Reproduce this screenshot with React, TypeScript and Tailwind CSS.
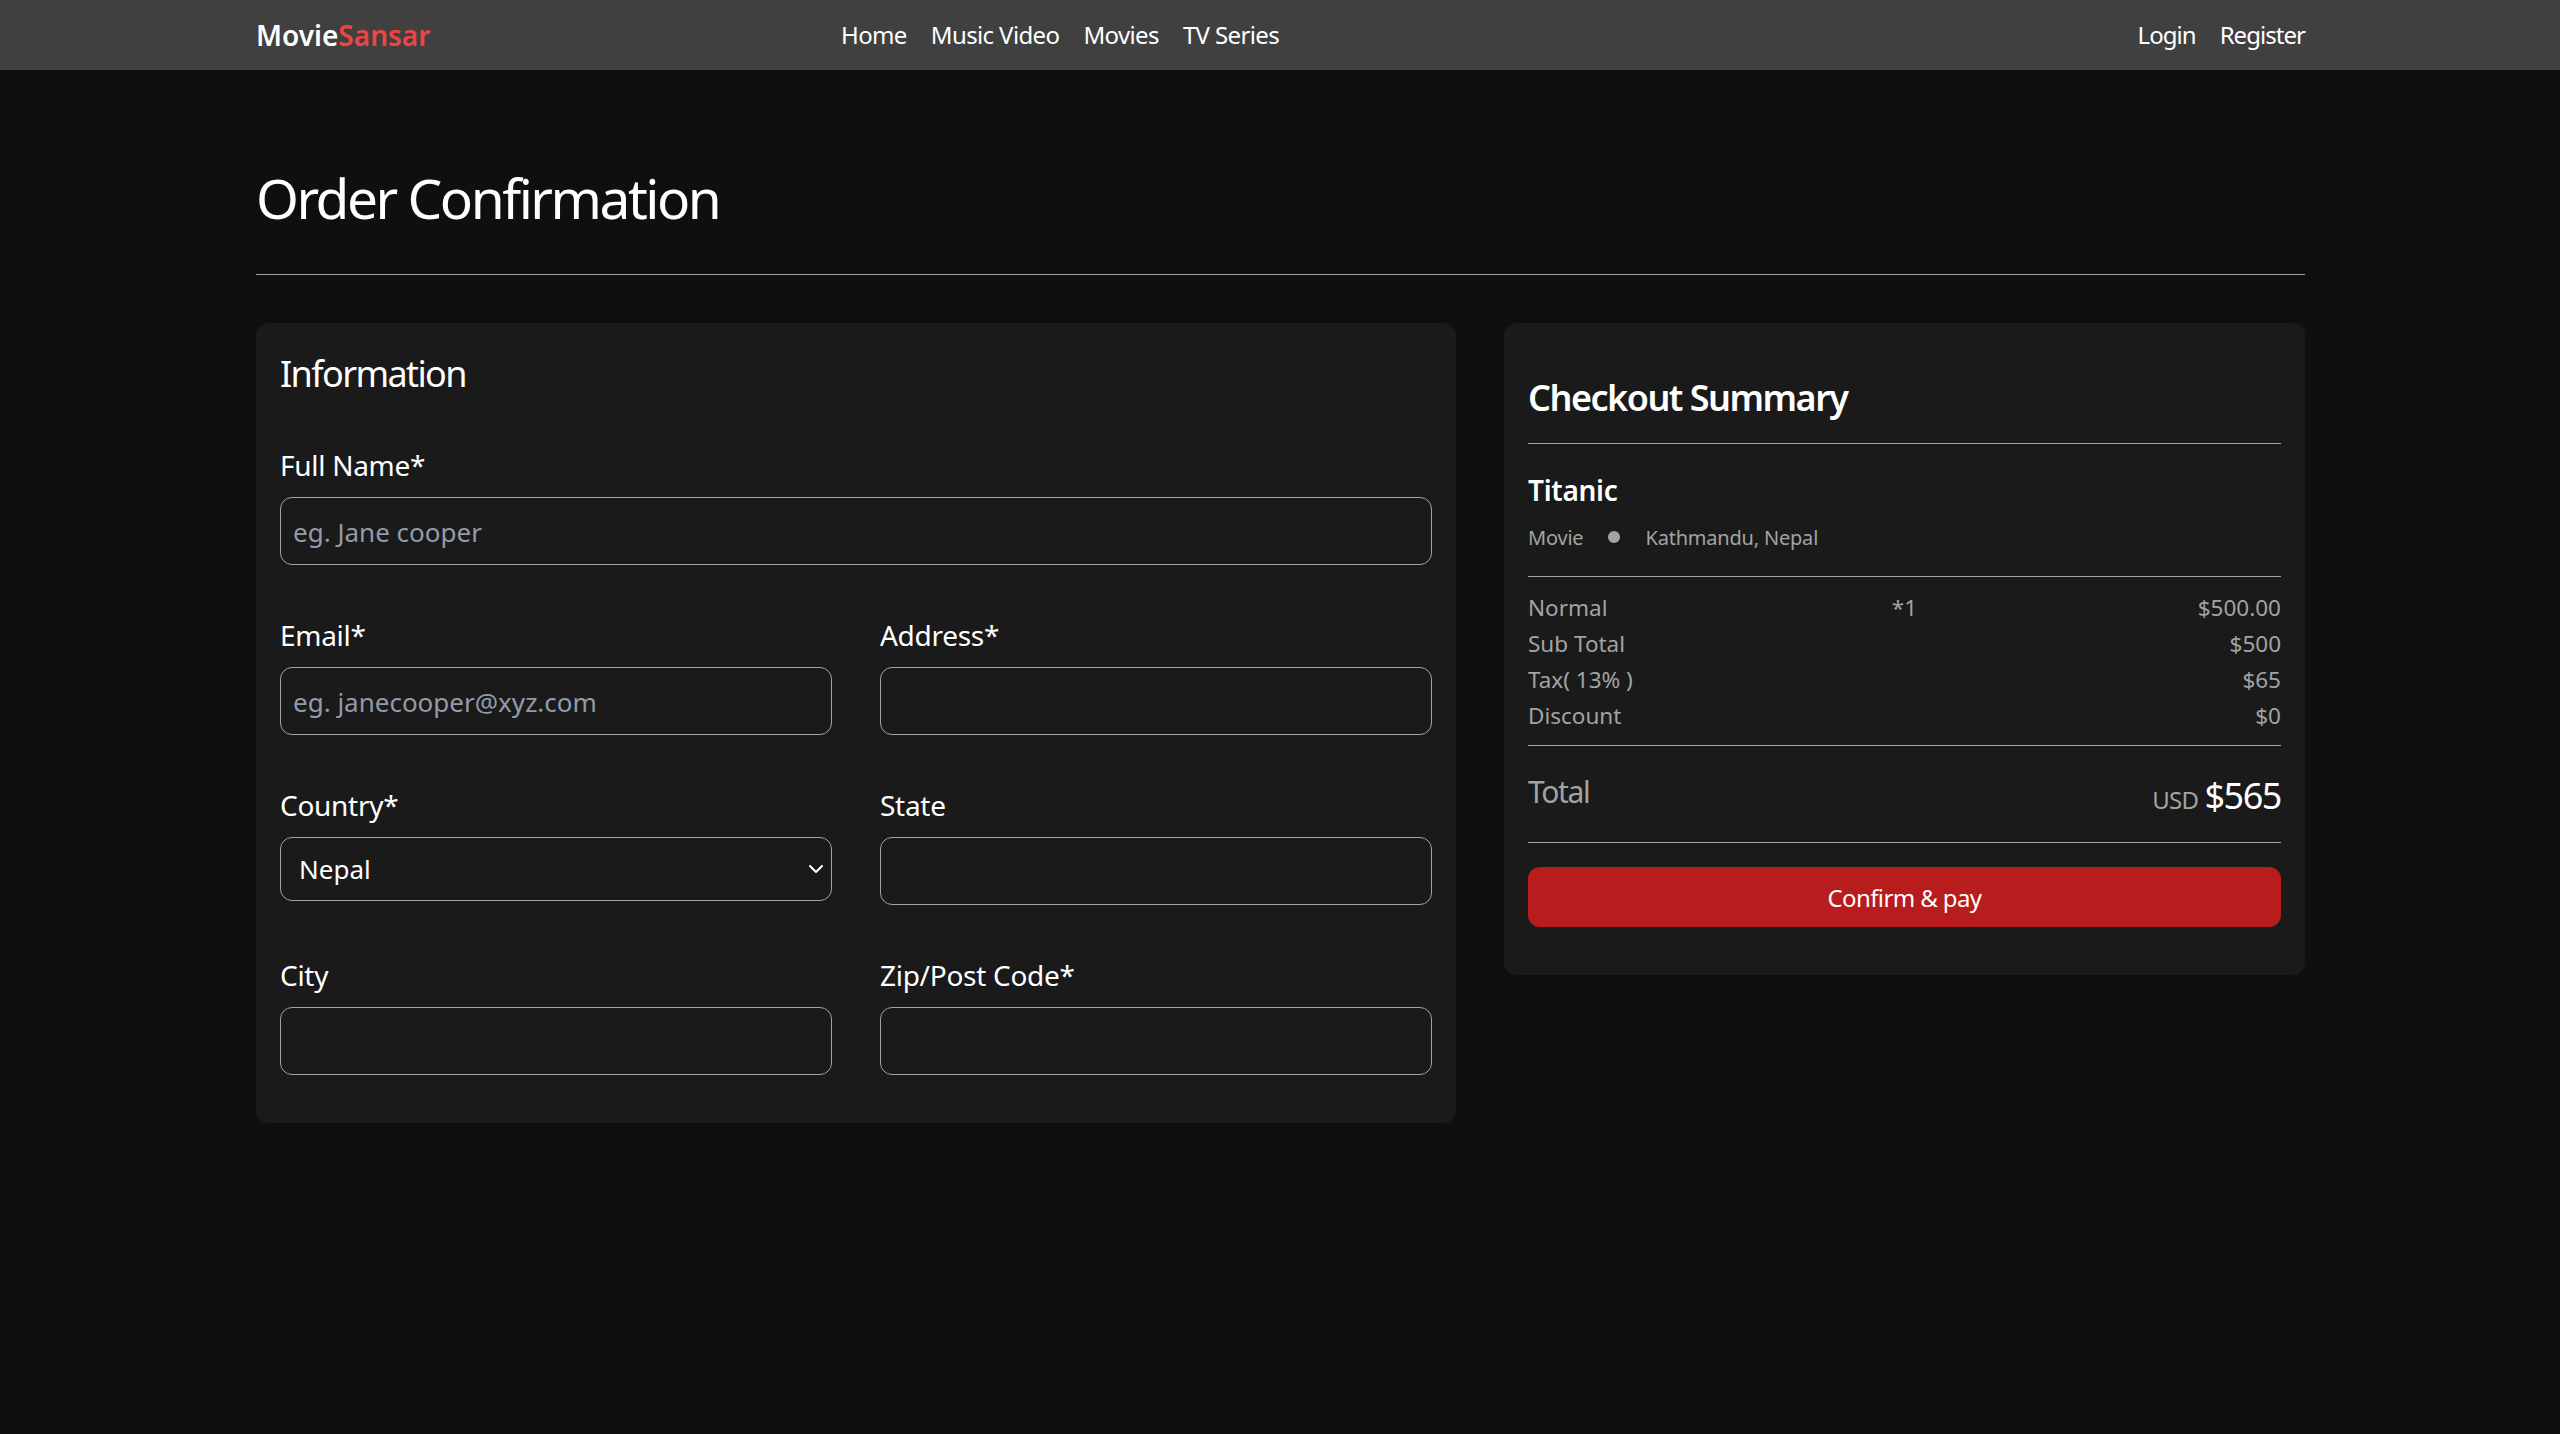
import React from "react";
import { ChevronDown } from "lucide-react";

const font = "font-['Noto_Sans','Open_Sans',sans-serif]";

function Label({ children }: { children: React.ReactNode }) {
  return <label className="mb-[11px] text-[28px] leading-[42px] tracking-[-0.01em] text-white">{children}</label>;
}

function Field({ label, placeholder, className = "" }: { label: string; placeholder?: string; className?: string }) {
  return (
    <div className={"flex flex-col " + className}>
      <Label>{label}</Label>
      <input
        placeholder={placeholder}
        className="h-[68px] w-full rounded-[12px] border border-[#a3a3a3] bg-transparent px-[12px] pt-[2px] text-[26px] text-white placeholder:text-[#939ba8] outline-none"
      />
    </div>
  );
}

function Row({ left, mid, right }: { left: string; mid?: string; right: string }) {
  return (
    <div className="grid h-[36px] grid-cols-3 items-center text-[22.5px] leading-[36px] text-[#a3a3a3]">
      <span>{left}</span>
      <span className="text-center">{mid}</span>
      <span className="text-right">{right}</span>
    </div>
  );
}

export default function App() {
  return (
    <div className={"min-h-[1434px] bg-[#0f0f0f] text-white " + font}>
      <nav className="h-[70px] bg-[#404040]">
        <div className="ml-[256px] flex h-full w-[2049px] items-center">
          <div className="w-[585px] text-[28px] font-semibold">
            Movie<span className="text-[#ef4444]">Sansar</span>
          </div>
          <div className="flex gap-[24px] text-[24px] tracking-[-0.026em]">
            <span>Home</span>
            <span>Music Video</span>
            <span>Movies</span>
            <span>TV Series</span>
          </div>
          <div className="ml-auto flex gap-[24px] text-[24px] tracking-[-0.04em]">
            <span>Login</span>
            <span>Register</span>
          </div>
        </div>
      </nav>

      <main className="ml-[256px] w-[2049px] pt-[86px]">
        <h1 className="text-[55px] leading-[84px] font-normal tracking-[-0.045em]">Order Confirmation</h1>
        <div className="mt-[34px] border-t border-[#a3a3a3]" />

        <div className="mt-[48px] grid grid-cols-[1200px_801px] items-start gap-[48px]">
          <section className="rounded-[12px] bg-[#1a1a1a] p-[24px] pb-[48px]">
            <h2 className="mb-[43px] text-[36px] leading-[54px] font-normal tracking-[-0.045em]">Information</h2>
            <div className="grid grid-cols-2 gap-x-[48px] gap-y-[49px]">
              <Field className="col-span-2" label="Full Name*" placeholder="eg. Jane cooper" />
              <Field label="Email*" placeholder="eg. janecooper@xyz.com" />
              <Field label="Address*" />
              <div className="flex flex-col">
                <Label>Country*</Label>
                <div className="relative">
                  <select className="h-[64px] w-full appearance-none rounded-[12px] border border-[#a3a3a3] bg-[#1a1a1a] pl-[18px] pt-[1px] text-[26px] text-white outline-none">
                    <option>Nepal</option>
                  </select>
                  <ChevronDown className="pointer-events-none absolute right-[4px] top-[20px] h-[24px] w-[24px] text-white" strokeWidth={2} />
                </div>
              </div>
              <Field label="State" />
              <Field label="City" />
              <Field label="Zip/Post Code*" />
            </div>
          </section>

          <section className="rounded-[12px] bg-[#1a1a1a] p-[24px] pb-[48px]">
            <h2 className="pt-[24px] pb-[18px] text-[36px] leading-[54px] font-semibold tracking-[-0.042em]">Checkout Summary</h2>
            <div className="border-t border-[#a3a3a3]" />
            <h3 className="mt-[25px] text-[28px] leading-[42px] font-semibold tracking-[-0.01em]">Titanic</h3>
            <div className="mt-[12px] flex items-center pb-[23px] text-[20px] leading-[30px] tracking-[-0.01em] text-[#a3a3a3]">
              <span>Movie</span>
              <span className="mx-[25px] -mt-[2px] h-[12px] w-[12px] rounded-full bg-[#a3a3a3]" />
              <span>Kathmandu, Nepal</span>
            </div>
            <div className="border-t border-[#a3a3a3] pt-[13px] pb-[11px]">
              <Row left="Normal" mid="*1" right="$500.00" />
              <Row left="Sub Total" right="$500" />
              <Row left="Tax( 13% )" right="$65" />
              <Row left="Discount" right="$0" />
            </div>
            <div className="flex h-[97px] items-center justify-between border-t border-[#a3a3a3] pt-[3px]">
              <span className="-mt-[8px] text-[30px] tracking-[-0.045em] text-[#a3a3a3]">Total</span>
              <span className="flex items-baseline gap-[6px]">
                <span className="text-[24px] tracking-[-0.03em] text-[#a3a3a3]">USD</span>
                <span className="text-[36px] tracking-[-0.04em] text-white">$565</span>
              </span>
            </div>
            <div className="border-t border-[#a3a3a3]" />
            <button className="mt-[24px] h-[60px] w-full rounded-[12px] bg-[#b91c1c] pt-[1px] text-[24px] tracking-[-0.025em] text-white">
              Confirm &amp; pay
            </button>
          </section>
        </div>
      </main>
    </div>
  );
}
